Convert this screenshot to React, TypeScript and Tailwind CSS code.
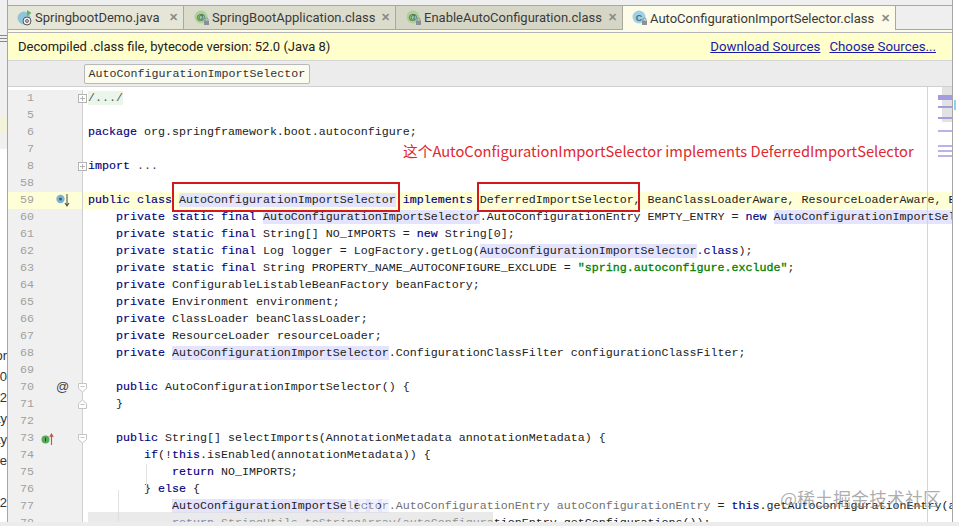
const MONO = 'font-["Liberation_Mono",monospace]';

type Seg = { t: string; k?: 'kw' | 'hl' | 'str' | 'fold' | 'foldgray' };

const kw = (t: string): Seg => ({ t, k: 'kw' });
const hl = (t: string): Seg => ({ t, k: 'hl' });
const tx = (t: string): Seg => ({ t });

const lines: { n: number; indent?: number; segs: Seg[]; caret?: boolean }[] = [
  { n: 1, segs: [{ t: '/.../', k: 'fold' }] },
  { n: 5, segs: [] },
  { n: 6, segs: [kw('package '), tx('org.springframework.boot.autoconfigure;')] },
  { n: 7, segs: [] },
  { n: 8, segs: [kw('import '), { t: '...', k: 'foldgray' }] },
  { n: 58, segs: [] },
  {
    n: 59,
    caret: true,
    segs: [
      kw('public class '),
      hl('AutoConfigurationImportSelector'),
      kw(' implements '),
      tx('DeferredImportSelector, BeanClassLoaderAware, ResourceLoaderAware, BeanFactoryAware'),
    ],
  },
  {
    n: 60,
    indent: 4,
    segs: [
      kw('private static final '),
      hl('AutoConfigurationImportSelector'),
      tx('.AutoConfigurationEntry EMPTY_ENTRY = '),
      kw('new '),
      hl('AutoConfigurationImportSelector'),
    ],
  },
  { n: 61, indent: 4, segs: [kw('private static final '), tx('String[] NO_IMPORTS = '), kw('new '), tx('String[0];')] },
  {
    n: 62,
    indent: 4,
    segs: [
      kw('private static final '),
      tx('Log logger = LogFactory.getLog('),
      hl('AutoConfigurationImportSelector'),
      tx('.'),
      kw('class'),
      tx(');'),
    ],
  },
  {
    n: 63,
    indent: 4,
    segs: [
      kw('private static final '),
      tx('String PROPERTY_NAME_AUTOCONFIGURE_EXCLUDE = '),
      { t: '"spring.autoconfigure.exclude"', k: 'str' },
      tx(';'),
    ],
  },
  { n: 64, indent: 4, segs: [kw('private '), tx('ConfigurableListableBeanFactory beanFactory;')] },
  { n: 65, indent: 4, segs: [kw('private '), tx('Environment environment;')] },
  { n: 66, indent: 4, segs: [kw('private '), tx('ClassLoader beanClassLoader;')] },
  { n: 67, indent: 4, segs: [kw('private '), tx('ResourceLoader resourceLoader;')] },
  {
    n: 68,
    indent: 4,
    segs: [kw('private '), hl('AutoConfigurationImportSelector'), tx('.ConfigurationClassFilter configurationClassFilter;')],
  },
  { n: 69, segs: [] },
  { n: 70, indent: 4, segs: [kw('public '), tx('AutoConfigurationImportSelector() {')] },
  { n: 71, indent: 4, segs: [tx('}')] },
  { n: 72, segs: [] },
  { n: 73, indent: 4, segs: [kw('public '), tx('String[] selectImports(AnnotationMetadata annotationMetadata) {')] },
  { n: 74, indent: 8, segs: [kw('if'), tx('(!'), kw('this'), tx('.isEnabled(annotationMetadata)) {')] },
  { n: 75, indent: 12, segs: [kw('return '), tx('NO_IMPORTS;')] },
  { n: 76, indent: 8, segs: [tx('} '), kw('else '), tx('{')] },
  {
    n: 77,
    indent: 12,
    segs: [
      hl('AutoConfigurationImportSelector'),
      tx('.AutoConfigurationEntry autoConfigurationEntry = '),
      kw('this'),
      tx('.getAutoConfigurationEntry(annotationMetadata);'),
    ],
  },
  {
    n: 78,
    indent: 12,
    segs: [kw('return '), tx('StringUtils.toStringArray(autoConfigurationEntry.getConfigurations());')],
  },
];

function segClass(k?: Seg['k']) {
  if (k === 'kw') return 'text-[#000080] [-webkit-text-stroke:0.15px_#000080]';
  if (k === 'hl') return 'bg-[#e4e4ff] text-[#222]';
  if (k === 'str') return 'text-[#008000] [-webkit-text-stroke:0.3px_#008000]';
  if (k === 'fold') return 'bg-[#ebf6eb] text-[#555]';
  if (k === 'foldgray') return 'text-[#444]';
  return 'text-[#222]';
}

function LockBadge() {
  return (
    <g>
      <rect x="10" y="10.5" width="5" height="4.5" fill="#8a9099" />
      <path d="M11 10.5V9.5a1.5 1.5 0 0 1 3 0v1" fill="none" stroke="#8a9099" />
    </g>
  );
}

function AtIcon() {
  return (
    <svg width="16" height="16" viewBox="0 0 16 16" className="shrink-0">
      <circle cx="7" cy="7" r="6.5" fill="#a9d39a" />
      <text x="7" y="10" textAnchor="middle" fontSize="9" fontWeight="700" fill="#4a5a4a" fontFamily="Liberation Sans">
        @
      </text>
      <LockBadge />
    </svg>
  );
}

function ClassIcon() {
  return (
    <svg width="16" height="16" viewBox="0 0 16 16" className="shrink-0">
      <circle cx="7" cy="7" r="6.5" fill="#9fd0e6" />
      <text x="7" y="10.5" textAnchor="middle" fontSize="9" fontWeight="700" fill="#3f6b86" fontFamily="Liberation Sans">
        C
      </text>
      <LockBadge />
    </svg>
  );
}

function RunClassIcon() {
  return (
    <svg width="16" height="16" viewBox="0 0 16 16" className="shrink-0">
      <circle cx="7" cy="8" r="6.5" fill="#8fc4dc" />
      <path d="M10 0l4.5 3L10 6z" fill="#5fb35f" />
      <circle cx="10" cy="11" r="4" fill="#eee" stroke="#555" strokeWidth="1" />
      <circle cx="10" cy="11" r="1.4" fill="none" stroke="#555" strokeWidth="1" />
    </svg>
  );
}

function Tab({
  icon,
  label,
  width,
  className,
}: {
  icon: React.ReactNode;
  label: string;
  width: string;
  className: string;
}) {
  return (
    <div className={`flex h-full items-center border-r border-[#a8a8a0] ${width} ${className}`}>
      {icon}
      <span className="ml-[2px] text-[13px] leading-none text-[#3a3a3a]">{label}</span>
      <span className="ml-auto mr-[5px] text-[11px] font-bold leading-none text-[#8a8a8a]">✕</span>
    </div>
  );
}

function FoldBox({ kind }: { kind: 'plus' | 'start' | 'end' }) {
  return (
    <svg width="9" height="17" viewBox="0 0 9 17" className="shrink-0">
      {kind === 'plus' && (
        <g fill="none" stroke="#b4b4b4">
          <rect x="0.5" y="4.5" width="8" height="8" fill="#fff" />
          <path d="M2 8.5h5M4.5 6v5" />
        </g>
      )}
      {kind === 'start' && (
        <g fill="#fff" stroke="#c4c4c4">
          <path d="M0.5 4.5h8v5l-4 3.5-4-3.5z" />
          <path d="M2.5 7.5h4" />
        </g>
      )}
      {kind === 'end' && (
        <g fill="#fff" stroke="#c4c4c4">
          <path d="M0.5 12.5h8v-5l-4-3.5-4 3.5z" />
          <path d="M2.5 8.5h4" />
        </g>
      )}
    </svg>
  );
}

function GutterMark({ n }: { n: number }) {
  if (n === 59) {
    return (
      <svg width="14" height="14" viewBox="0 0 14 14" className="absolute left-[48px] top-[1px]">
        <circle cx="4.5" cy="6" r="4.2" fill="#7fb2cf" />
        <circle cx="4.5" cy="6" r="1.5" fill="#2f5f7f" />
        <path d="M11 1v11M9 10l2 3 2-3" fill="none" stroke="#555" strokeWidth="1.1" />
      </svg>
    );
  }
  if (n === 70) {
    return <span className="absolute left-[48px] top-0 font-['Liberation_Sans',sans-serif] text-[13px] leading-[16px] text-[#444]">@</span>;
  }
  if (n === 73) {
    return (
      <svg width="14" height="14" viewBox="0 0 14 14" className="absolute left-[33px] top-[2px]">
        <circle cx="4.5" cy="7.5" r="4" fill="#5aa85a" />
        <path d="M4.5 5.5v4" stroke="#1f4f1f" strokeWidth="1" />
        <path d="M10.5 13V3M8.8 5l1.7-3 1.7 3" fill="none" stroke="#c0543f" strokeWidth="1.1" />
      </svg>
    );
  }
  return null;
}

function CodeRow({ line }: { line: (typeof lines)[number] }) {
  const fold =
    line.n === 1 || line.n === 8 ? 'plus' : line.n === 70 || line.n === 73 ? 'start' : line.n === 71 ? 'end' : null;
  return (
    <div className="flex h-[17px] shrink-0">
      <div
        className={`relative z-10 flex w-[75px] shrink-0 items-center border-r border-[#d0d0d0] ${
          line.caret ? 'bg-[#ffffd7]' : 'bg-[#f0f0f0]'
        }`}
      >
        <span className="w-[26px] text-right text-[11.67px] leading-[17px] text-[#a0a0a0]">{line.n}</span>
        <GutterMark n={line.n} />
        {fold && (
          <span className="absolute left-[70px] top-0">
            <FoldBox kind={fold} />
          </span>
        )}
      </div>
      <div
        className={`relative min-w-0 flex-1 overflow-hidden whitespace-pre pl-[5px] text-[11.67px] leading-[17px] ${
          line.caret ? 'bg-[#ffffd7]' : 'bg-white'
        }`}
      >
        {line.indent ? <span>{' '.repeat(line.indent)}</span> : null}
        {line.segs.map((s, i) => (
          <span key={i} className={segClass(s.k)}>
            {s.t}
          </span>
        ))}
      </div>
    </div>
  );
}

function LeftStrip() {
  const frags = ['or', '.0', ':2', 'ty', 'ty', 'le', '', '2'];
  return (
    <div className="flex w-[7px] shrink-0 flex-col overflow-hidden bg-white">
      <div className="flex h-[115px] flex-col gap-[2px] bg-[#f0f0f0] pt-[35px]">
        <div className="h-px w-full bg-[#888]" />
        <div className="h-px w-full bg-[#888]" />
        <div className="h-px w-full bg-[#888]" />
      </div>
      <div className="h-[18px] bg-[#f3f3dc]" />
      <div className="h-[16px] bg-[#f0f0f0]" />
      <div className="mt-[196px] flex flex-col">
        {frags.map((f, i) => (
          <div key={i} className="flex h-[21px] justify-end font-['Liberation_Sans',sans-serif] text-[13px] leading-[21px] text-[#333]">
            {f}
          </div>
        ))}
      </div>
    </div>
  );
}

// error stripe, drawn over the code: text runs on underneath it
function Stripe() {
  return (
    <div className="absolute bottom-0 right-0 top-0 z-10 flex w-[25px] flex-col items-end border-l border-[#d4d4d4] pt-[8px]">
      <div className="absolute right-0 top-0 h-[35px] w-[10px] bg-[#e2e2e2]" />
      <div className="relative h-[5px] w-[14px] bg-[#a49ce0]" />
      <div className="relative mt-[6px] h-[2px] w-[14px] bg-[#a49ce0]" />
      <div className="relative mt-[9px] h-[2px] w-[14px] bg-[#a49ce0]" />
      <div className="relative mt-[11px] h-[2px] w-[14px] bg-[#b9b2ec]" />
      <div className="relative mt-[13px] h-[2px] w-[14px] bg-[#b9b2ec]" />
      <div className="relative mt-[3px] h-[2px] w-[14px] bg-[#b9b2ec]" />
      <div className="relative mt-[3px] h-[2px] w-[14px] bg-[#b9b2ec]" />
    </div>
  );
}

export default function App() {
  return (
    <div className="relative flex h-[526px] w-[959px] flex-col overflow-hidden bg-[#f0f0f0] font-['Roboto','Liberation_Sans',sans-serif]">
      <div className="flex h-[522px] shrink-0 overflow-hidden">
        <LeftStrip />

        <div className="flex w-[946px] shrink-0 flex-col border-x border-[#a6a6a6]">
          <div className="flex h-[30px] shrink-0 items-end bg-[#efefef] pt-[5px]">
            <div className="flex h-[25px] w-full border-y border-[#a8a8a0]">
              <Tab icon={<RunClassIcon />} label="SpringbootDemo.java" width="w-[176px] pl-[9px]" className="bg-[#e6e6d8]" />
              <Tab icon={<AtIcon />} label="SpringBootApplication.class" width="w-[212px] pl-[10px]" className="bg-[#dcdccc]" />
              <Tab icon={<AtIcon />} label="EnableAutoConfiguration.class" width="w-[227px] pl-[10px]" className="bg-[#d6d6c6]" />
              <div className="-mb-px flex h-[24px] w-[273px] items-center border-r border-[#a8a8a0] bg-[#fcfce8] pl-[9px]">
                <ClassIcon />
                <span className="ml-[2px] text-[13px] leading-none text-[#3a3a3a]">
                  AutoConfigurationImportSelector.class
                </span>
                <span className="ml-auto mr-[5px] text-[11px] font-bold leading-none text-[#8a8a8a]">✕</span>
              </div>
            </div>
          </div>

          <div className="h-[3px] shrink-0 border-b border-[#b4b4b4] bg-[#fcfce8]" />

          <div className="flex h-[28px] shrink-0 items-center justify-between border-b border-[#d4d4d4] bg-[#ffffcc] pl-[10px] pr-[16px] text-[13px] text-[#222]">
            <span>Decompiled .class file, bytecode version: 52.0 (Java 8)</span>
            <div className="flex gap-[9px] text-[13.25px] text-[#1a1aa6] underline">
              <span>Download Sources</span>
              <span>Choose Sources...</span>
            </div>
          </div>

          <div className="flex h-[26px] shrink-0 items-center border-b border-[#d0d0d0] bg-[#ececec] pl-[76px] pt-[1px]">
            <div className={`rounded-[2px] border border-[#b8b8b8] bg-[#fbfbee] px-[3.5px] text-[11.67px] leading-[18px] text-[#333] ${MONO}`}>
              AutoConfigurationImportSelector
            </div>
          </div>

          <div className={`relative flex min-h-0 flex-1 flex-col overflow-hidden bg-white ${MONO}`}>
            <div className="h-[3px] shrink-0" />
            {lines.map((l) => (
              <CodeRow key={l.n} line={l} />
            ))}
            <Stripe />
          </div>
        </div>

        <div className="flex w-[6px] shrink-0 flex-col bg-white pt-[100px]">
          <div className="ml-[1px] h-[10px] w-[2px] bg-[#8fd0ee]" />
        </div>
      </div>
      <div className="h-[4px] shrink-0 bg-[#ececec]" />

      {/* indent guides */}
      <div className="absolute left-[118px] top-[490px] h-[32px] w-px bg-[#e2e2e2]" />
      <div className="absolute left-[146px] top-[464px] h-[26px] w-px bg-[#e2e2e2]" />

      {/* washed out part of the picture */}
      <div className="absolute left-[346px] top-[497px] h-[15px] w-[8px] bg-white/50" />
      <div className="absolute left-[358px] top-[497px] h-[15px] w-[8px] bg-white/50" />
      <div className="absolute left-[370px] top-[497px] h-[15px] w-[8px] bg-white/50" />
      <div className="absolute left-[382px] top-[497px] h-[15px] w-[8px] bg-white/50" />
      <div className="absolute left-[390px] top-[497px] h-[15px] w-[322px] bg-white/35" />
      <div className="absolute left-[88px] top-[512px] h-[10px] w-[405px] bg-[#dcdcdc]/60" />

      {/* annotation */}
      <div className="absolute left-[172px] top-[182px] h-[30px] w-[228px] border-2 border-[#d3191f]" />
      <div className="absolute left-[477px] top-[182px] h-[30px] w-[163px] border-2 border-[#d3191f]" />
      <div className="absolute left-[403px] top-[141px] whitespace-nowrap font-['Noto_Sans_CJK_SC','Open_Sans',sans-serif] text-[14.7px] leading-[20px] text-[#e0282e]">
        这个AutoConfigurationImportSelector implements DeferredImportSelector
      </div>

      {/* watermark */}
      <div className="absolute left-[780px] top-[487px] whitespace-nowrap font-['Noto_Sans_CJK_SC',sans-serif] text-[18px] leading-[22px] text-[#8a8a8a]/70">
        @稀土掘金技术社区
      </div>
    </div>
  );
}
